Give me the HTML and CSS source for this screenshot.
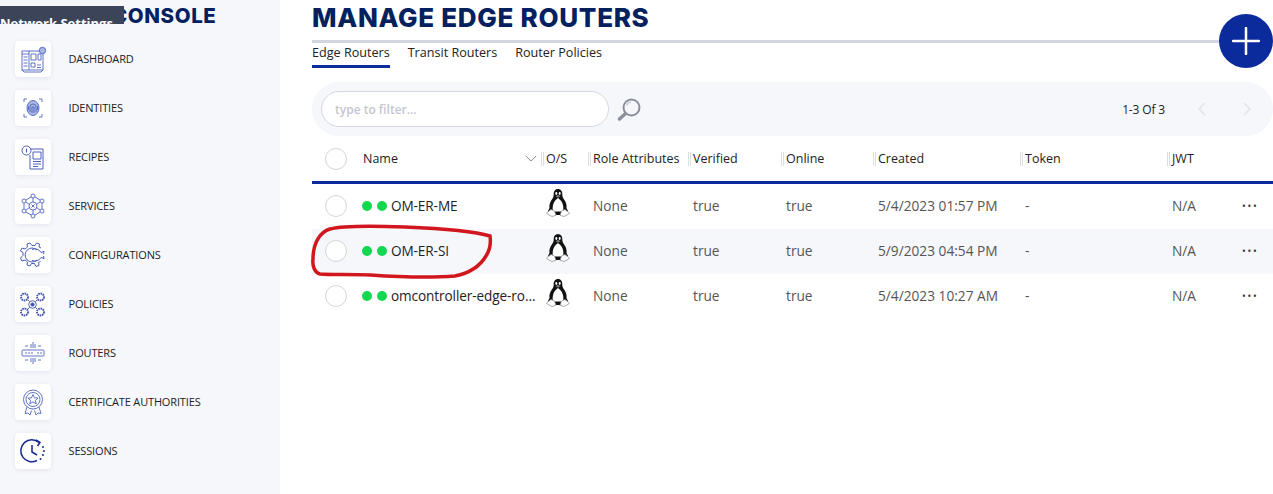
FILE: index.html
```html
<!DOCTYPE html>
<html lang="en">
<head>
  <meta charset="UTF-8" />
  <meta name="viewport" content="width=device-width, initial-scale=1.0" />
  <title>Manage Edge Routers</title>
  <link rel="stylesheet" href="styles.css">
</head>
<body>
  <div class="settings-tag">Network Settings</div>

  <aside class="sidebar">
    <div class="brand">CONSOLE</div>
    <nav class="nav">
      <a class="nav-item">
        <span class="tile">
          <svg viewBox="0 0 36 36" class="icon">
            <rect x="7" y="10" width="21" height="19" />
            <path d="M7 13h7M8.500 16h4M8.500 19h4M8.500 22h4M8.500 25h4M14 10v19M16 13h5v6h-5zM23 13h3v6h-3zM16 22h4v4h-4zM22 24h4M22 26.500h4M7 29l2 2h17l2-2" />
            <circle cx="27.500" cy="9.500" r="3.200" class="fill-soft" />
          </svg>
        </span>
        <span>Dashboard</span>
      </a>
      <a class="nav-item">
        <span class="tile">
          <svg viewBox="0 0 36 36" class="icon">
            <path d="M9 12v-3h3M24 9h3v3M27 24v3h-3M12 27h-3v-3" />
            <ellipse cx="18" cy="18" rx="6" ry="7.500" class="fill-soft" />
            <path d="M15 22v-5a3 3 0 0 1 6 0v5M17 23v-6h2v6M13.500 20v-4M22.500 20v-4" />
          </svg>
        </span>
        <span>Identities</span>
      </a>
      <a class="nav-item">
        <span class="tile">
          <svg viewBox="0 0 36 36" class="icon icon-dark">
            <circle cx="11.500" cy="11.500" r="4.500" />
            <path d="M11.500 9.500v4M15 10h13v20H15V16M18 13h8v7h-8zM18 22.500h8M18 25h8M18 27.500h5" />
          </svg>
        </span>
        <span>Recipes</span>
      </a>
      <a class="nav-item">
        <span class="tile">
          <svg viewBox="0 0 36 36" class="icon">
            <circle cx="18" cy="8" r="2" />
            <circle cx="18" cy="28" r="2" />
            <circle cx="9" cy="13" r="2" />
            <circle cx="27" cy="13" r="2" />
            <circle cx="9" cy="23" r="2" />
            <circle cx="27" cy="23" r="2" />
            <circle cx="18" cy="18" r="4" />
            <path d="M16.500 16.500l3 3M19.500 16.500l-3 3M18 10v4M18 22v4M11 14l3.500 2.500M25 14l-3.500 2.500M11 22l3.500-2.500M25 22l-3.500-2.500M9 15v6M27 15v6M11 12l5-3M25 12l-5-3M11 24l5 3M25 24l-5 3" />
          </svg>
        </span>
        <span>Services</span>
      </a>
      <a class="nav-item">
        <span class="tile">
          <svg viewBox="0 0 36 36" class="icon icon-dark">
            <path d="M26 11l-2-1 .5-3-3-1-1.500 2.500h-3L15 6l-3 1 .5 3-2.500 2-3-1-1.500 3 2.500 1.500v3L5.500 21l1.500 3 3-1 2.500 2-.5 3 3 1 1.500-2.500h3L21 29.500l3-1-.5-3 2-1" />
            <path d="M22 13a7 7 0 1 0 0 10M17 12.500a7 7 0 0 1 9 3l3-1M17 23.500a7 7 0 0 0 9-3l3 1M29 14l-.5 3M29 22l-.5-3" />
          </svg>
        </span>
        <span>Configurations</span>
      </a>
      <a class="nav-item">
        <span class="tile">
          <svg viewBox="0 0 36 36" class="icon icon-dark">
            <circle cx="9.500" cy="11" r="3.500" class="dash" />
            <circle cx="25.500" cy="11" r="3.500" class="dash" />
            <circle cx="9.500" cy="26" r="3.500" class="dash" />
            <circle cx="25.500" cy="26" r="3.500" class="dash" />
            <circle cx="17.500" cy="18.500" r="3.800" />
            <circle cx="17.500" cy="18.500" r="1.600" class="fill-solid" />
            <path d="M13 14l1.500 1.500M22 14l-1.500 1.500M13 23l1.500-1.500M22 23l-1.500-1.500" />
          </svg>
        </span>
        <span>Policies</span>
      </a>
      <a class="nav-item">
        <span class="tile">
          <svg viewBox="0 0 36 36" class="icon">
            <rect x="7" y="15" width="22" height="6" rx="1" />
            <path d="M10 18h2M13 18h2M16 18h2M22 18h2M25 18h2M18 7v6M16 9v4M20 9v4M18 23v6M16 23v4M20 23v4M10 11h3M23 11h3M10 25h3M23 25h3" />
          </svg>
        </span>
        <span>Routers</span>
      </a>
      <a class="nav-item">
        <span class="tile">
          <svg viewBox="0 0 36 36" class="icon">
            <circle cx="18" cy="15.500" r="9.500" />
            <circle cx="18" cy="15.500" r="7" />
            <path d="M18 10.500l1.500 3.300 3.500.3-2.600 2.300.8 3.400-3.200-1.900-3.200 1.900.8-3.400-2.600-2.300 3.500-.3zM12 23l-2 6.500 3-.5 2 2 1.500-4.500M24 23l2 6.500-3-.5-2 2-1.500-4.500" />
          </svg>
        </span>
        <span>Certificate Authorities</span>
      </a>
      <a class="nav-item">
        <span class="tile">
          <svg viewBox="0 0 36 36" class="icon icon-strong">
            <path d="M24 9.500a11 11 0 1 0 -2 18" />
            <path d="M21 7l4 2.500-2.500 3.500M17 12v7l5 3" />
            <path d="M28 14v.1M29 18v.1M28 22v.1M25.500 26v.1" class="dots" />
          </svg>
        </span>
        <span>Sessions</span>
      </a>
    </nav>
  </aside>

  <main class="content">
    <h1 class="page-title">MANAGE EDGE ROUTERS</h1>
    <div class="title-rule"></div>

    <div class="tabs">
      <a class="tab tab-active">Edge Routers</a>
      <a class="tab">Transit Routers</a>
      <a class="tab">Router Policies</a>
    </div>

    <div class="toolbar">
      <input class="filter" type="text" placeholder="type to filter..." />
      <svg class="search-icon" viewBox="0 0 24 24">
        <circle cx="14.500" cy="10.500" r="8" class="lens" />
        <path d="M9.500 8.500a5.500 5.500 0 0 1 4.500-3.500" class="glint" />
        <path d="M8 17l-5.500 5" class="handle" />
      </svg>
      <div class="pager">
        <span class="pager-count">1-3 Of 3</span>
        <svg class="pager-arrow" viewBox="0 0 12 16"><path d="M9 2L3 8l6 6" /></svg>
        <svg class="pager-arrow" viewBox="0 0 12 16"><path d="M3 2l6 6-6 6" /></svg>
      </div>
    </div>

    <div class="table">
      <div class="row head">
        <span class="check"></span>
        <span class="name-head">Name
          <svg class="sort" viewBox="0 0 14 8"><path d="M1 1l6 6 6-6" /></svg>
        </span>
        <span class="cell">O/S</span>
        <span class="cell">Role Attributes</span>
        <span class="cell">Verified</span>
        <span class="cell">Online</span>
        <span class="cell">Created</span>
        <span class="cell">Token</span>
        <span class="cell">JWT</span>
      </div>

      <div class="row item">
        <span class="check"></span>
        <span class="name"><i class="dot"></i><i class="dot"></i><b>OM-ER-ME</b></span>
        <span class="cell os"><svg class="tux" viewBox="0 0 24 30"><use href="#tux" /></svg></span>
        <span class="cell">None</span>
        <span class="cell">true</span>
        <span class="cell">true</span>
        <span class="cell">5/4/2023 01:57 PM</span>
        <span class="cell">-</span>
        <span class="cell">N/A</span>
        <span class="more">&bull;&bull;&bull;</span>
      </div>
      <div class="row item item-alt">
        <span class="check"></span>
        <span class="name"><i class="dot"></i><i class="dot"></i><b>OM-ER-SI</b></span>
        <span class="cell os"><svg class="tux" viewBox="0 0 24 30"><use href="#tux" /></svg></span>
        <span class="cell">None</span>
        <span class="cell">true</span>
        <span class="cell">true</span>
        <span class="cell">5/9/2023 04:54 PM</span>
        <span class="cell">-</span>
        <span class="cell">N/A</span>
        <span class="more">&bull;&bull;&bull;</span>
      </div>
      <div class="row item">
        <span class="check"></span>
        <span class="name"><i class="dot"></i><i class="dot"></i><b>omcontroller-edge-router</b></span>
        <span class="cell os"><svg class="tux" viewBox="0 0 24 30"><use href="#tux" /></svg></span>
        <span class="cell">None</span>
        <span class="cell">true</span>
        <span class="cell">true</span>
        <span class="cell">5/4/2023 10:27 AM</span>
        <span class="cell">-</span>
        <span class="cell">N/A</span>
        <span class="more">&bull;&bull;&bull;</span>
      </div>
    </div>
  </main>

  <button class="add-btn" type="button">
    <svg viewBox="0 0 28 28"><path d="M14 1v26M1 14h26" /></svg>
  </button>

  <svg class="scribble" viewBox="305 222 195 60">
    <path d="M313 259C313 243 320 232 330 229C345 225 380 226 405 227C430 228 470 230 490 236C491 243 490 250 486 256C480 266 470 273 455 276C430 278 400 277 370 275C350 274 330 275 320 274C315 273 312 266 313 259Z" />
  </svg>

  <svg class="defs" width="0" height="0">
    <symbol id="tux" viewBox="0 0 24 30">
      <path d="M12 1c-3 0-4.500 2.500-4.300 5.500.1 2-.7 3.300-2 5.300C4 14.300 3 17 3.500 20l-1.500 3 4 4h12l4-4-1.500-3c.5-3-.5-5.700-2.200-8.200-1.300-2-2.100-3.300-2-5.300C16.500 3.500 15 1 12 1z" fill="#111" />
      <path d="M12 10c-2 1.500-3.700 3-4.700 6-.8 2.500-.8 5-.3 7.500h10c.5-2.500.5-5-.3-7.500-1-3-2.700-4.500-4.700-6z" fill="#fff" />
      <ellipse cx="10.300" cy="5.500" rx="1" ry="1.400" fill="#fff" />
      <ellipse cx="13.700" cy="5.500" rx="1" ry="1.400" fill="#fff" />
      <path d="M9.500 8.200L12 6.800l2.500 1.400L12 9.800z" fill="#777" />
      <path d="M5 21.500l3.500 1.500 1.500 4.300-4 1.200-4.500-2.300L.5 25z" fill="#fff" stroke="#888" stroke-width=".7" />
      <path d="M19 21.500L15.500 23 14 27.300l4 1.200 4.500-2.300.9-1.200z" fill="#fff" stroke="#888" stroke-width=".7" />
    </symbol>
  </svg>
</body>
</html>
```

FILE: styles.css
```css
* {
  box-sizing: border-box;
}
html, body {
  height: 100%;
}
body {
  display: flex;
  margin: 0;
  overflow: hidden;
  background-color: white;
  color: #222;
  font-family: "Open Sans", sans-serif;
}

/* sidebar */
.sidebar {
  width: 280px;
  flex-shrink: 0;
  padding-left: 15px;
  background-color: #f5f7fb;
}
.brand {
  height: 41px;
  padding: 3px 0 0 97px;
  color: #04205f;
  font-family: "Inter", sans-serif;
  font-size: 20.5px;
  font-weight: 800;
  letter-spacing: 0.6px;
  line-height: 25px;
}
.nav {
  display: flex;
  flex-direction: column;
  gap: 13px;
}
.nav-item {
  display: flex;
  align-items: center;
  gap: 17.5px;
  font-size: 11px;
  font-weight: 500;
  letter-spacing: -0.15px;
  line-height: 14px;
  text-transform: uppercase;
  color: #222;
}
.tile {
  width: 36px;
  height: 36px;
  border-radius: 4px;
  background-color: white;
  box-shadow: 0 1px 4px rgba(60, 70, 120, 0.1);
}
.icon {
  display: block;
  width: 36px;
  height: 36px;
  fill: none;
  stroke: #4f64bf;
  stroke-width: 0.9;
}
.icon-dark {
  stroke: #3a4fb0;
}
.icon-strong {
  stroke: #14298f;
  stroke-width: 1.5;
}
.fill-soft {
  fill: #aab6e4;
}
.fill-solid {
  fill: #3a4fb0;
}
.dash {
  stroke-width: 1.8;
  stroke-dasharray: 1.6 0.7;
}
.dots {
  stroke-width: 2;
  stroke-linecap: round;
}

.settings-tag {
  position: absolute;
  top: 6px;
  left: 0;
  z-index: 2;
  width: 124px;
  height: 18px;
  overflow: hidden;
  background-color: #3c4459;
  color: white;
  font-size: 13px;
  font-weight: 700;
  line-height: 34px;
  white-space: nowrap;
}

/* main area */
.content {
  flex: 1;
  min-width: 0;
  padding-left: 32px;
}
.page-title {
  margin: 0;
  height: 40px;
  padding-top: 2px;
  color: #04205f;
  font-family: "Inter", sans-serif;
  font-size: 26px;
  font-weight: 800;
  letter-spacing: 0.7px;
  line-height: 32px;
  white-space: nowrap;
}
.title-rule {
  height: 3px;
  background-color: #d3d5e1;
}
.tabs {
  display: flex;
  gap: 18px;
  height: 25px;
  margin-bottom: 14px;
}
.tab {
  height: 25px;
  padding-top: 1px;
  font-size: 12.6px;
  font-weight: 500;
  line-height: 17px;
  color: #222;
}
.tab-active {
  border-bottom: 3px solid #0b2a9c;
}

.toolbar {
  display: flex;
  align-items: center;
  height: 54px;
  padding-left: 9px;
  border-radius: 27px;
  background-color: #f5f7fb;
}
.filter {
  width: 288px;
  height: 36px;
  padding: 0 13px;
  border: 1px solid #d5d8e4;
  border-radius: 18px;
  background-color: white;
  font-family: "Open Sans", sans-serif;
  font-size: 12px;
  font-weight: 600;
}
.filter::placeholder {
  color: #c4c7d0;
}
.search-icon {
  width: 24px;
  height: 24px;
  margin-left: 8px;
  fill: none;
}
.lens {
  stroke: #8a8f99;
  stroke-width: 2;
}
.glint {
  stroke: #c2c6ce;
  stroke-width: 1.2;
}
.handle {
  stroke: #8a8f99;
  stroke-width: 3.500;
  stroke-linecap: round;
}
.pager {
  display: flex;
  align-items: center;
  margin-left: auto;
  padding-right: 20px;
}
.pager-count {
  margin-right: 31px;
  font-size: 12px;
  letter-spacing: -0.15px;
}
.pager-arrow {
  width: 12px;
  height: 16px;
  margin-left: 33px;
  fill: none;
  stroke: #e2e4ec;
  stroke-width: 1.5;
}
.pager-arrow:first-of-type {
  margin-left: 0;
}

/* table */
.row {
  display: grid;
  grid-template-columns: 38px 178px 47px 100px 93px 92px 147px 147px 75px 1fr;
  align-items: center;
  padding-left: 13px;
}
.head {
  height: 48px;
  border-bottom: 3px solid #0b2a9c;
  font-size: 12.5px;
  color: #222;
}
.head .cell {
  display: flex;
  align-items: center;
  border-left: 3px double #ddd;
  padding-left: 2px;
  line-height: 14px;
}
.name-head {
  display: flex;
  align-items: center;
  justify-content: space-between;
  padding-right: 4px;
}
.sort {
  width: 12px;
  height: 7px;
  fill: none;
  stroke: #777;
}
.check {
  display: block;
  width: 22px;
  height: 22px;
  border: 1px solid #d5d5d8;
  border-radius: 50%;
  background-color: white;
}
.item {
  height: 45px;
  padding-bottom: 2px;
  font-size: 13.7px;
  color: #555;
}
.item-alt {
  background-color: #f5f7fb;
}
.item .cell {
  padding-left: 5px;
}
.item .os {
  display: flex;
  padding-bottom: 5px;
  padding-left: 5px;
}
.name {
  display: flex;
  align-items: center;
  min-width: 0;
  margin-left: -1px;
  padding-right: 3px;
}
.name b {
  overflow: hidden;
  color: #222;
  font-weight: 400;
  font-size: 13.6px;
  letter-spacing: -0.1px;
  text-overflow: ellipsis;
  white-space: nowrap;
}
.dot {
  width: 10px;
  height: 10px;
  flex-shrink: 0;
  margin-right: 5px;
  border-radius: 50%;
  background-color: #12d84f;
}
.dot + .dot {
  margin-right: 4px;
}
.tux {
  width: 24px;
  height: 30px;
}
.more {
  color: #333;
  font-size: 10px;
  letter-spacing: 1.7px;
  line-height: 10px;
}

/* things sitting over the page */
.add-btn {
  position: absolute;
  top: 14px;
  left: 1219px;
  width: 54px;
  height: 54px;
  padding: 13px;
  border: none;
  border-radius: 50%;
  background-color: #0b2a9c;
}
.add-btn svg {
  display: block;
  width: 28px;
  height: 28px;
  fill: none;
  stroke: white;
  stroke-width: 2.500;
  stroke-linecap: round;
}
.scribble {
  position: absolute;
  top: 222px;
  left: 305px;
  width: 195px;
  height: 60px;
  fill: none;
  stroke: #d2161e;
  stroke-width: 3.500;
}
.defs {
  position: absolute;
}
```
